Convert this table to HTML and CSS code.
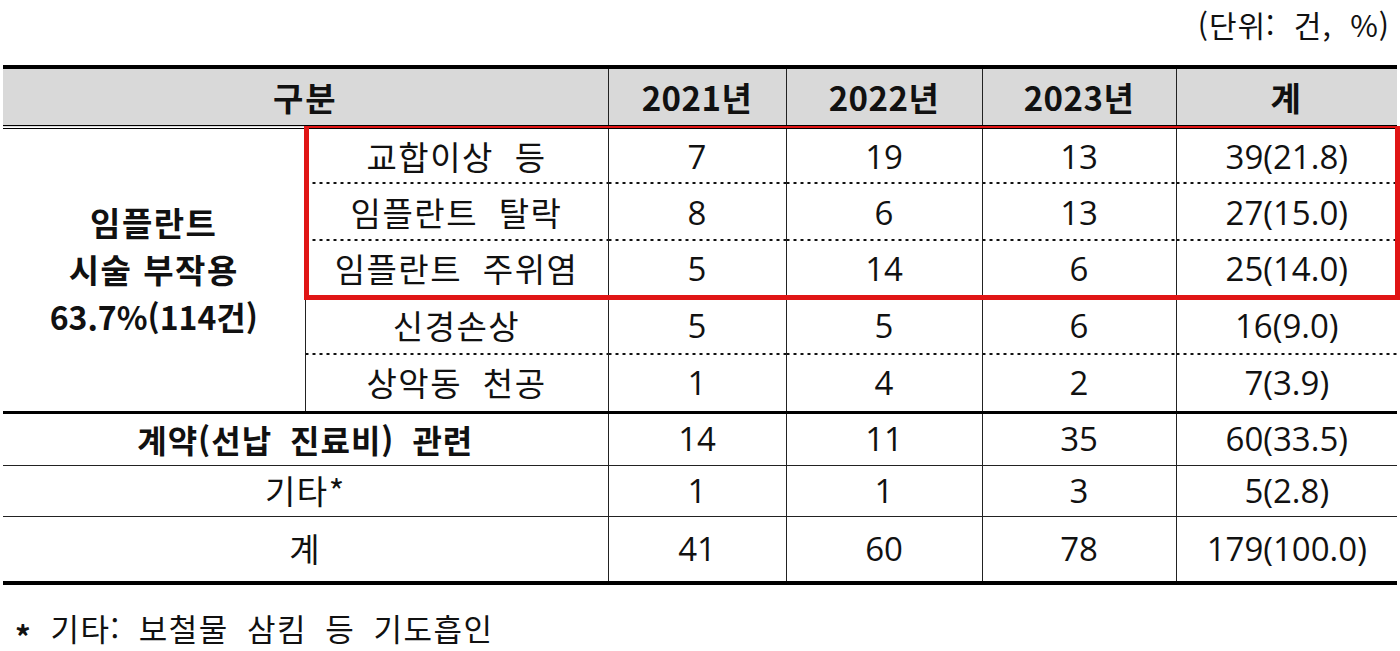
FILE: index.html
```html
<!DOCTYPE html>
<html lang="ko">
<head>
<meta charset="utf-8">
<title>임플란트 관련 피해구제 신청 현황</title>
<link rel="stylesheet" href="styles.css">
</head>
<body>
<div class="page">
  <div class="unit">(단위: 건, %)</div>
  <div class="table-wrap">
    <table class="stats">
      <colgroup>
        <col class="c-cat"><col class="c-sub"><col class="c-y1"><col class="c-y2"><col class="c-y3"><col class="c-total">
      </colgroup>
      <thead>
        <tr>
          <th colspan="2" class="first ko">구분</th>
          <th>2021년</th>
          <th>2022년</th>
          <th>2023년</th>
          <th class="ko">계</th>
        </tr>
      </thead>
      <tbody>
        <tr class="r1 dot">
          <th rowspan="5" class="cat first"><span class="ko">임플란트</span><br><span class="ko">시술 부작용</span><br><span class="pct">63.7%(114건)</span></th>
          <td class="sub ko">교합이상 등</td>
          <td class="num">7</td><td class="num">19</td><td class="num">13</td><td class="num">39(21.8)</td>
        </tr>
        <tr class="r2 dot">
          <td class="sub ko">임플란트 탈락</td>
          <td class="num">8</td><td class="num">6</td><td class="num">13</td><td class="num">27(15.0)</td>
        </tr>
        <tr class="r3">
          <td class="sub ko">임플란트 주위염</td>
          <td class="num">5</td><td class="num">14</td><td class="num">6</td><td class="num">25(14.0)</td>
        </tr>
        <tr class="r4 dot">
          <td class="sub ko">신경손상</td>
          <td class="num">5</td><td class="num">5</td><td class="num">6</td><td class="num">16(9.0)</td>
        </tr>
        <tr class="r5">
          <td class="sub ko">상악동 천공</td>
          <td class="num">1</td><td class="num">4</td><td class="num">2</td><td class="num">7(3.9)</td>
        </tr>
        <tr class="r6 thick-top">
          <th colspan="2" class="first ko">계약(선납 진료비) 관련</th>
          <td class="num">14</td><td class="num">11</td><td class="num">35</td><td class="num">60(33.5)</td>
        </tr>
        <tr class="r7">
          <td colspan="2" class="first ko">기타*</td>
          <td class="num">1</td><td class="num">1</td><td class="num">3</td><td class="num">5(2.8)</td>
        </tr>
        <tr class="r8">
          <td colspan="2" class="first ko">계</td>
          <td class="num">41</td><td class="num">60</td><td class="num">78</td><td class="num">179(100.0)</td>
        </tr>
      </tbody>
    </table>
    <div class="highlight"></div>
  </div>
  <p class="note"><span class="star">*</span> 기타: 보철물 삼킴 등 기도흡인</p>
</div>
</body>
</html>
```

FILE: styles.css
```css
html, body {
  margin: 0;
  padding: 0;
  background: #ffffff;
}

body {
  font-family: "Noto Sans CJK KR", "Noto Sans", sans-serif;
  color: #111;
}

.page {
  width: 1400px;
}

.unit {
  height: 65px;
  box-sizing: border-box;
  padding: 6px 10px 0 0;
  text-align: right;
  font-size: 30px;
  line-height: 36px;
  letter-spacing: 1px;
  word-spacing: 9px;
}

.table-wrap {
  position: relative;
  margin-left: 3px;
  width: 1394px;
}

.stats {
  border-collapse: collapse;
  table-layout: fixed;
  width: 1394px;
  font-size: 32px;
}

.c-cat { width: 302px; }
.c-sub { width: 303px; }
.c-y1 { width: 178px; }
.c-y2 { width: 196px; }
.c-y3 { width: 194px; }
.c-total { width: 221px; }

.stats th,
.stats td {
  padding: 0;
  text-align: center;
  vertical-align: middle;
  border-left: 1px solid #222;
  line-height: 1.2;
}

.stats .first {
  border-left: none;
}

.stats .ko {
  font-size: 33px;
  letter-spacing: 1.5px;
}

.stats thead tr {
  height: 60px;
  background: #d9d9d9;
}

.stats thead th {
  font-weight: 700;
  border-top: 4px solid #000;
  border-bottom: 4px double #000;
  padding-top: 2px;
  font-size: 33px;
  letter-spacing: 0.5px;
}

.stats thead th.ko {
  letter-spacing: 2px;
}

.stats .cat {
  font-weight: 700;
  line-height: 47px;
  border-left: none;
}

.stats .cat .pct {
  font-size: 32px;
  letter-spacing: 0;
}

.stats .sub {
  word-spacing: 10px;
}

.stats .num {
  font-family: "Open Sans", "Noto Sans CJK KR", sans-serif;
  font-size: 33px;
}

.stats .dot td {
  background-image: linear-gradient(90deg, #111 0 3px, transparent 3px 7px);
  background-size: 7px 2px;
  background-repeat: repeat-x;
  background-position: 0 100%;
}

.r1 { height: 57px; }
.r2 { height: 57px; }
.r3 { height: 56px; }
.r4 { height: 58px; }
.r5 { height: 57px; }
.r6 { height: 53px; }
.r7 { height: 51px; }
.r8 { height: 67px; }

.stats .thick-top th,
.stats .thick-top td {
  border-top: 3px solid #000;
}

.stats .r6 th {
  font-weight: 700;
  font-size: 32px;
  letter-spacing: 1px;
  word-spacing: 8px;
}

.stats .r7 td,
.stats .r8 td {
  border-top: 1px solid #222;
}

.stats .r8 td {
  border-bottom: 4px solid #000;
}

.highlight {
  position: absolute;
  left: 301px;
  top: 61px;
  width: 1096px;
  height: 174px;
  box-sizing: border-box;
  border: 5px solid #e01515;
  border-top-width: 2px;
  pointer-events: none;
}

.note {
  margin: 24px 0 0 15px;
  font-size: 31px;
  line-height: 38px;
  letter-spacing: 1.5px;
  word-spacing: 8px;
}

.note .star {
  font-weight: 700;
  vertical-align: -0.25em;
}
```
